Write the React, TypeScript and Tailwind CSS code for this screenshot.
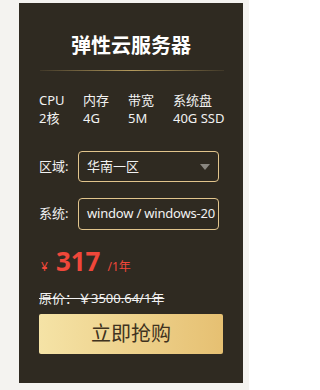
const specs = [
  { name: 'CPU', value: '2核', w: 'w-[44px]' },
  { name: '内存', value: '4G', w: 'w-[45px]' },
  { name: '带宽', value: '5M', w: 'w-[45px]' },
  { name: '系统盘', value: '40G SSD', w: 'w-[60px]' },
]

const font = "font-['Segoe_UI','Noto_Sans','Noto_Sans_CJK_SC',sans-serif]"

export default function App() {
  return (
    <div className={`h-[390px] w-[249px] bg-[#f4f3f0] pt-[3px] pl-[19px] ${font}`}>
      <div className="flex h-[380px] w-[224px] flex-col bg-[#2f2a21]">
        {/* Title */}
        <h1 className="mt-[29px] text-center text-[20px] leading-[28px] font-bold text-white">
          弹性云服务器
        </h1>
        <div className="mt-[10px] ml-[21px] mr-[19px] h-px bg-[linear-gradient(90deg,rgba(160,135,80,0.15),#b49a5c_50%,rgba(160,135,80,0.15))]" />

        {/* Specs */}
        <div className="mt-[20px] flex pl-5 text-[13px] leading-[18px] text-[#f2f2f2]">
          {specs.map((s) => (
            <div key={s.name} className={`flex flex-col ${s.w}`}>
              <span>{s.name}</span>
              <span>{s.value}</span>
            </div>
          ))}
        </div>

        {/* Selects */}
        <div className="mt-[24px] flex flex-col gap-4 pl-5 text-[13px] text-[#f2f2f2]">
          <div className="flex items-center">
            <span className="w-[39px]">区域:</span>
            <div className="flex h-[31px] w-[141px] items-center justify-between rounded-[4px] border border-[#e2c58d] pl-2 pr-[8px]">
              <span>华南一区</span>
              <span className="h-0 w-0 border-x-[5px] border-t-[6px] border-x-transparent border-t-[#8a8780]" />
            </div>
          </div>
          <div className="flex items-center">
            <span className="w-[39px]">系统:</span>
            <div className="flex h-[32px] w-[141px] items-center overflow-hidden whitespace-nowrap rounded-[4px] border border-[#e2c58d] pl-2 text-[13px] tracking-[-0.2px]">
              window / windows-20
            </div>
          </div>
        </div>

        {/* Price */}
        <div className="mt-[16px] flex items-baseline pl-[22px] text-[#f0473a]">
          <span className="text-[12px]">¥</span>
          <span className="ml-[8px] text-[26px] leading-[30px] font-bold">317</span>
          <span className="ml-[7px] text-[12px]">/1年</span>
        </div>
        <div className="mt-[13px] pl-5 text-[13px] leading-[18px] text-[#f2f2f2] line-through">
          原价：￥3500.64/1年
        </div>

        {/* Button */}
        <button className="mt-[7px] ml-5 flex h-[40px] w-[184px] items-center justify-center rounded-[2px] bg-[linear-gradient(90deg,#f5e3a6,#e6c072)] text-[20px] text-[#3f3220]">
          立即抢购
        </button>
      </div>
    </div>
  )
}
